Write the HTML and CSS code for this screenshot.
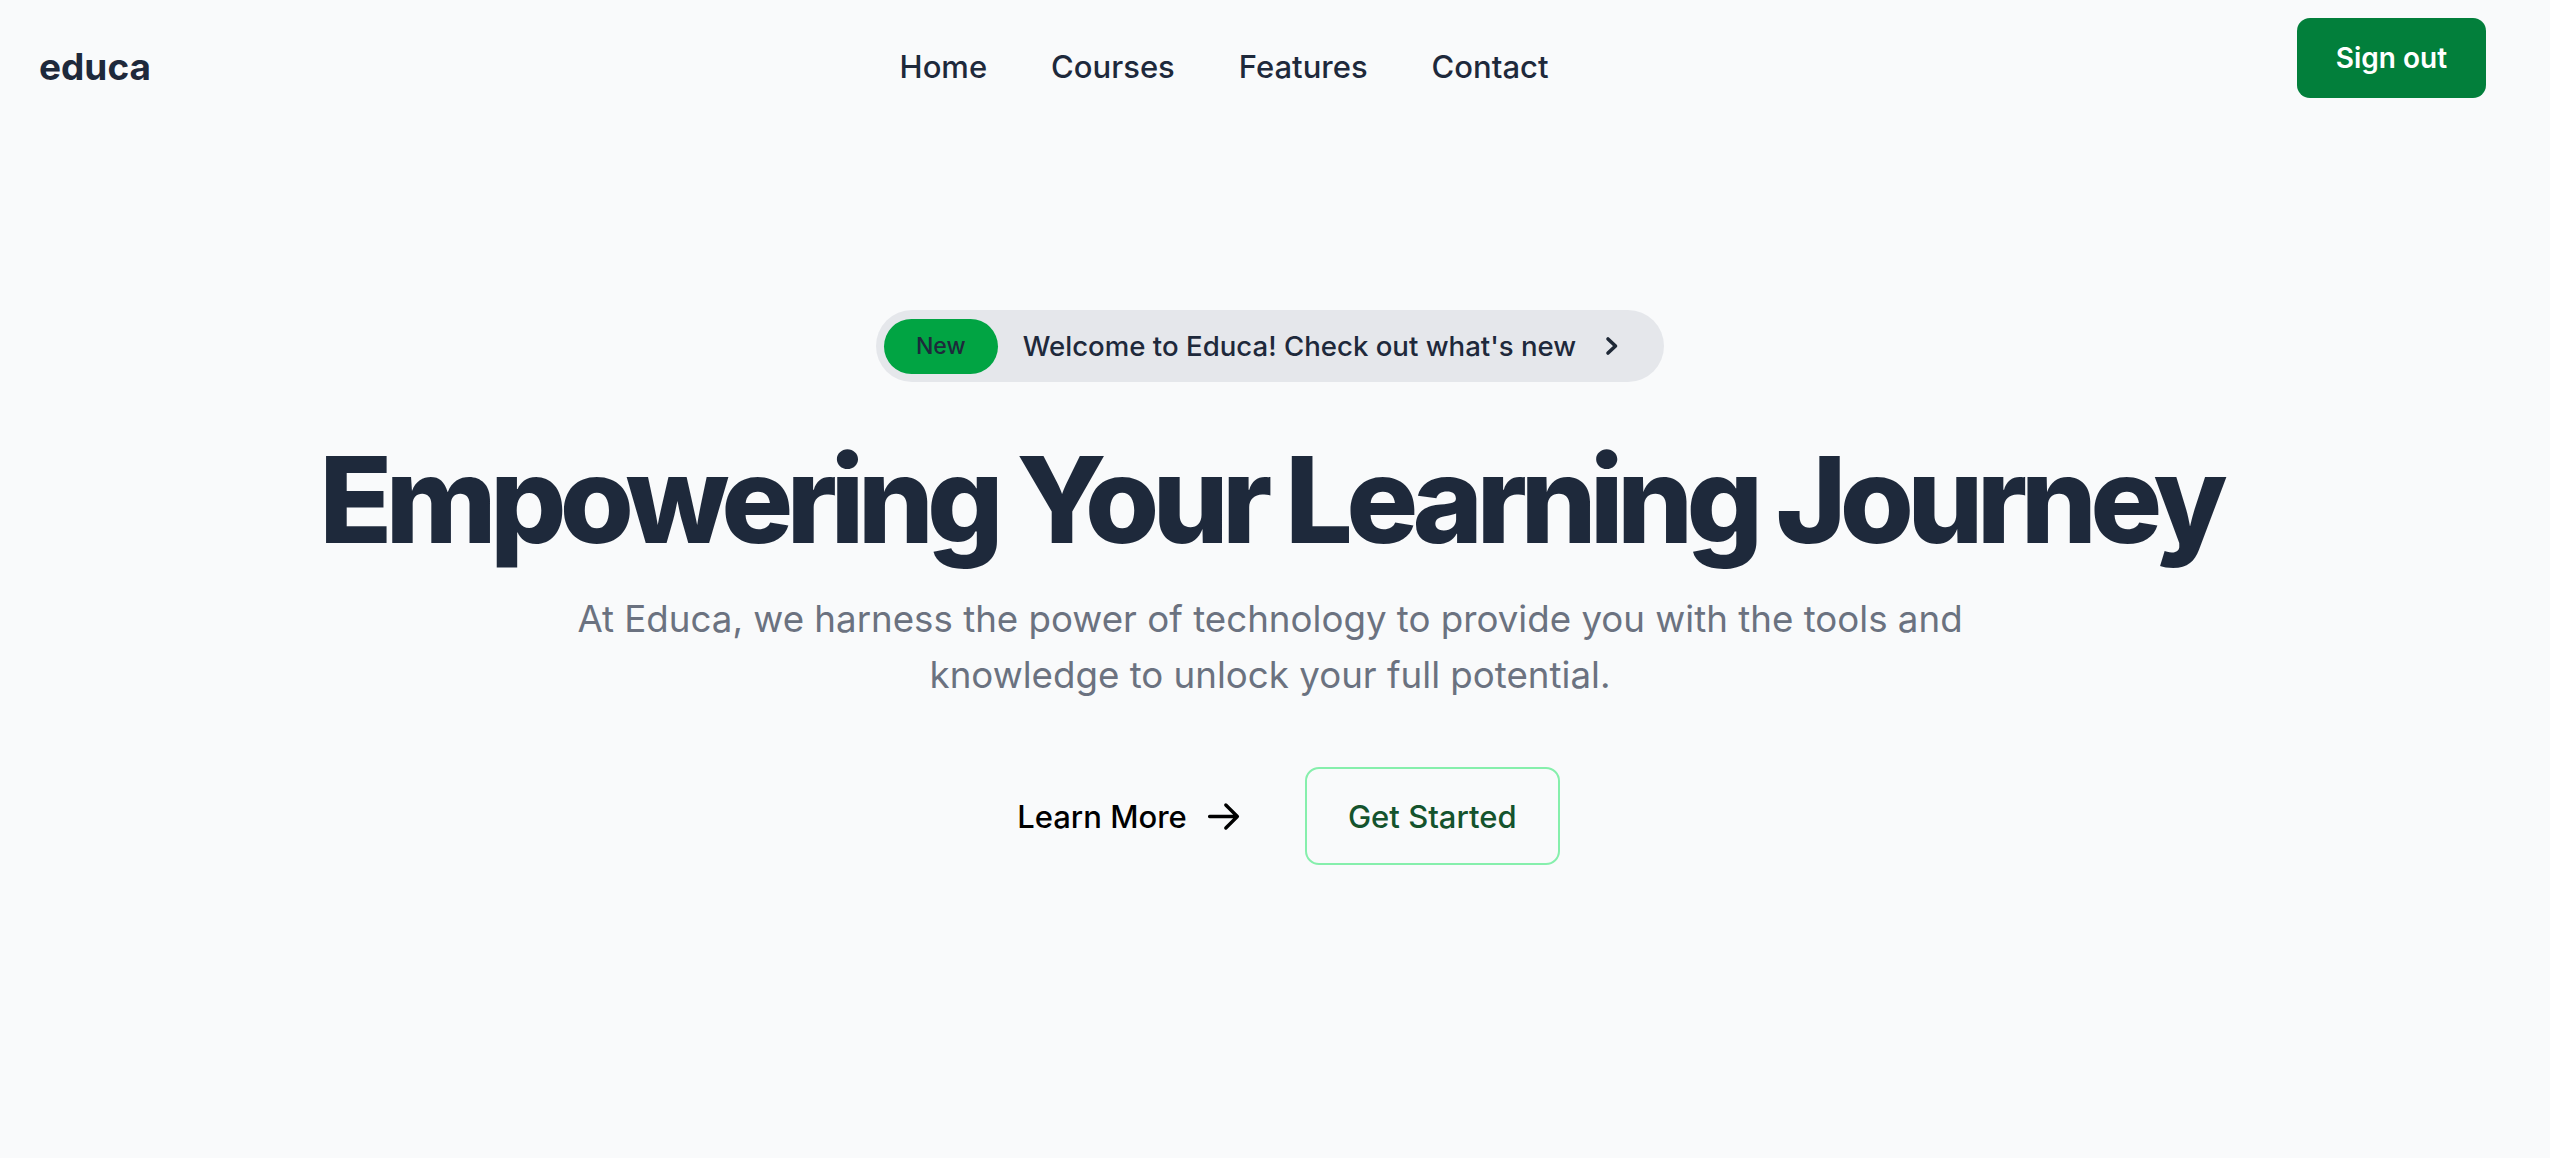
FILE: index.html
```html
<!DOCTYPE html>
<html lang="en">
<head>
<meta charset="utf-8">
<title>Educa</title>
<link rel="stylesheet" href="styles.css">
</head>
<body>
<header class="topbar">
  <a class="logo" href="#">educa</a>
  <nav class="nav">
    <a href="#">Home</a>
    <a href="#">Courses</a>
    <a href="#">Features</a>
    <a href="#">Contact</a>
  </nav>
  <a class="signout" href="#">Sign out</a>
</header>
<main class="hero">
  <a class="announce" href="#">
    <span class="tag">New</span>
    <span class="announce-text">Welcome to Educa! Check out what's new</span>
    <svg class="chev" viewBox="0 0 14 20" width="14" height="20" aria-hidden="true"><path d="M3 3 L10.5 10 L3 17" fill="none" stroke="#1f2937" stroke-width="3.6" stroke-linecap="round" stroke-linejoin="round"/></svg>
  </a>
  <h1 class="title">Empowering Your Learning Journey</h1>
  <p class="lead">At Educa, we harness the power of technology to provide you with the tools and knowledge to unlock your full potential.</p>
  <div class="actions">
    <a class="learn" href="#">Learn More
      <svg class="arrow" viewBox="0 0 24 24" width="37" height="37" aria-hidden="true"><path d="M13.5 4.5 21 12m0 0-7.5 7.5M21 12H3" fill="none" stroke="#000" stroke-width="2.2" stroke-linecap="round" stroke-linejoin="round"/></svg>
    </a>
    <a class="start" href="#">Get Started</a>
  </div>
</main>
</body>
</html>
```
FILE: styles.css
```css
* { box-sizing: border-box; }
html, body { margin: 0; padding: 0; }
body {
  background: #f9fafb;
  font-family: Inter, "Noto Sans", "Liberation Sans", sans-serif;
  color: #1e293b;
  min-height: 1158px;
}
a { text-decoration: none; color: inherit; }

.topbar {
  display: flex;
  justify-content: space-between;
  align-items: flex-start;
  padding: 18px 64px 0 39px;
}
.logo {
  margin-top: 30px;
  font-size: 37px;
  line-height: 37px;
  font-weight: 700;
  letter-spacing: 0;
  color: #1e293b;
}
.nav {
  display: flex;
  gap: 64px;
  margin-top: 33px;
}
.nav a {
  font-size: 31px;
  line-height: 31px;
  font-weight: 500;
  color: #1e293b;
}
.signout {
  display: flex;
  align-items: center;
  justify-content: center;
  width: 189px;
  height: 80px;
  border-radius: 13px;
  background: #027f3b;
  color: #fff;
  font-size: 28px;
  font-weight: 600;
}

.hero {
  display: flex;
  flex-direction: column;
  align-items: center;
  padding: 212px 10px 0 0;
}
.announce {
  display: flex;
  align-items: center;
  height: 72px;
  padding: 0 45px 0 8px;
  border-radius: 36px;
  background: #e5e7eb;
  color: #1e293b;
}
.tag {
  display: flex;
  align-items: center;
  justify-content: center;
  width: 114px;
  height: 55px;
  border-radius: 28px;
  background: #01a443;
  color: #1e293b;
  font-size: 23px;
  font-weight: 500;
}
.announce-text {
  margin-left: 25px;
  font-size: 27.6px;
  font-weight: 500;
}
.chev { margin-left: 29px; }

.title {
  margin: 58px 0 0;
  font-size: 120px;
  line-height: 120px;
  font-weight: 800;
  letter-spacing: -6.8px;
  color: #1e293b;
}
.lead {
  margin: 31px 0 0;
  max-width: 1440px;
  text-align: center;
  font-size: 36.7px;
  line-height: 56px;
  color: #6b7280;
}
.actions {
  display: flex;
  align-items: center;
  gap: 31px;
  margin-top: 64px;
  margin-left: 5px;
}
.learn {
  display: flex;
  align-items: center;
  gap: 18px;
  padding: 0 32px;
  font-size: 31px;
  font-weight: 500;
  color: #000;
}
.start {
  display: flex;
  align-items: center;
  justify-content: center;
  width: 255px;
  height: 98px;
  border: 2px solid #86efac;
  border-radius: 14px;
  font-size: 31px;
  font-weight: 500;
  color: #14532d;
}
```
